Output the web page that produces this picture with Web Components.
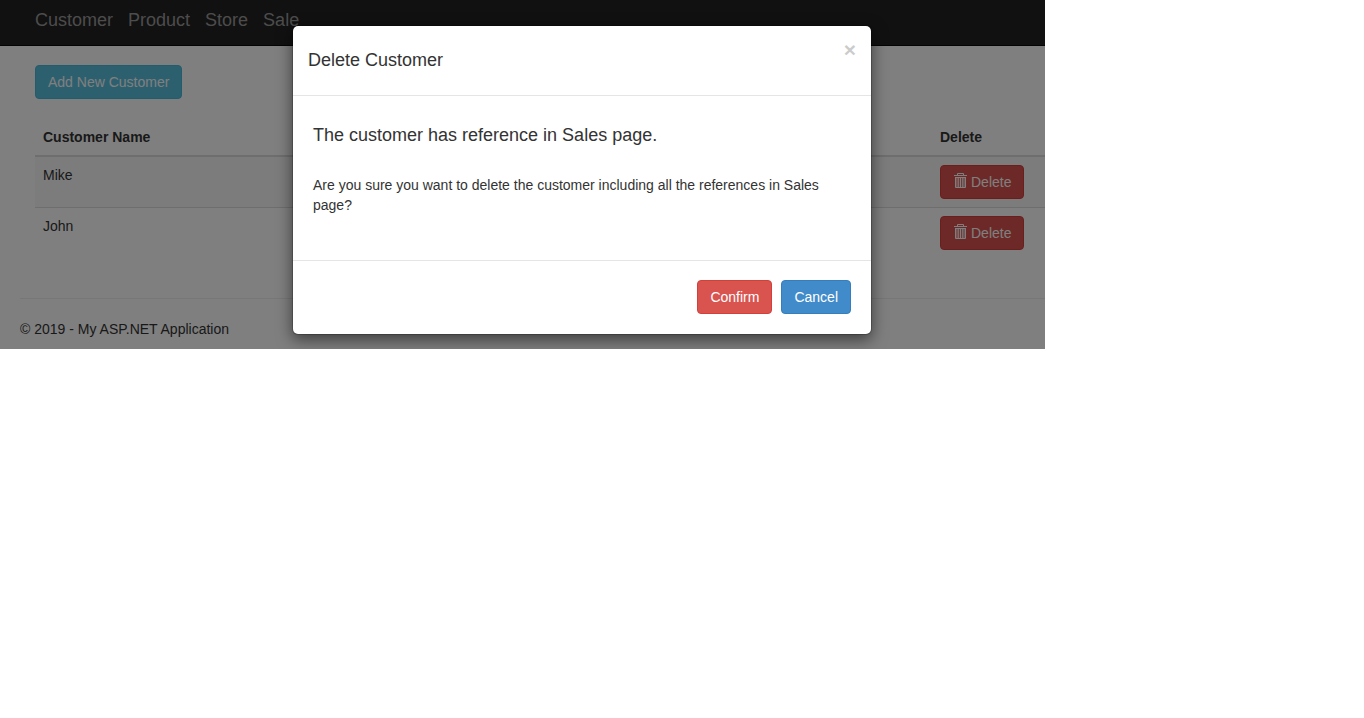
<!DOCTYPE html>
<html lang="en">
<head>
<meta charset="utf-8">
<title>Customers - My ASP.NET Application</title>
<style>
  body {
    margin: 0;
    background: #fff;
    color: #333;
    font: 14px/20px "Liberation Sans", Arial, sans-serif;
  }
</style>
</head>
<body>
<app-shell>
  <nav-bar slot="nav">
    <nav-link href="#customer">Customer</nav-link>
    <nav-link href="#product">Product</nav-link>
    <nav-link href="#store">Store</nav-link>
    <nav-link href="#sale">Sale</nav-link>
  </nav-bar>
  <app-button kind="info">Add New Customer</app-button>
  <customer-table names="Mike,John"></customer-table>
  <span slot="footer">© 2019 - My ASP.NET Application</span>
  <modal-dialog slot="modal">
    <span slot="title">Delete Customer</span>
    <span slot="heading">The customer has reference in Sales page.</span>
    <span>Are you sure you want to delete the customer including all the references in Sales page?</span>
    <app-button slot="actions" kind="danger">Confirm</app-button>
    <app-button slot="actions" kind="primary">Cancel</app-button>
  </modal-dialog>
</app-shell>

<script>
  class BaseElement extends HTMLElement {
    constructor() {
      super();
      this.attachShadow({ mode: "open" });
    }
    connectedCallback() {
      this.shadowRoot.innerHTML = this.render();
    }
  }

  customElements.define("app-shell", class extends BaseElement {
    render() {
      return `
        <style>
          :host { display: block; position: relative; overflow: hidden; margin-right: 319px; }
          main { padding: 19px 0 40px 35px; }
          footer { margin-left: 20px; padding: 20px 0 10px; border-top: 1px solid #eee; }
          .backdrop { position: absolute; inset: 0; background: rgba(0, 0, 0, .5); }
          .overlay { position: absolute; inset: 0; padding: 25px 173px 0 292px; }
        </style>
        <slot name="nav"></slot>
        <main><slot></slot></main>
        <footer><slot name="footer"></slot></footer>
        <div class="backdrop"></div>
        <div class="overlay"><slot name="modal"></slot></div>`;
    }
  });

  customElements.define("nav-bar", class extends BaseElement {
    render() {
      return `
        <style>
          :host { display: block; background: #222; border-bottom: 1px solid #080808; }
          nav { display: flex; gap: 15px; padding: 10px 35px 15px; }
        </style>
        <nav><slot></slot></nav>`;
    }
  });

  customElements.define("nav-link", class extends BaseElement {
    render() {
      return `
        <style>
          :host { display: block; font-size: 18px; }
          a { color: #999; text-decoration: none; }
        </style>
        <a href="${this.getAttribute("href")}"><slot></slot></a>`;
    }
  });

  customElements.define("trash-icon", class extends BaseElement {
    render() {
      return `
        <style>
          :host { display: block; }
          svg { display: block; }
        </style>
        <svg width="14" height="17" viewBox="0 0 14 17" fill="currentColor" aria-hidden="true">
          <path fill-rule="evenodd" d="M4 3V2q0-1 1-1h5q1 0 1 1v1h3v1H1V3zM5 3h5V2H5z"/>
          <path fill-rule="evenodd" d="M2 5h11v10q0 1-1 1H3q-1 0-1-1zM3.500 6v9h1V6zM5.800 6v9h1V6zM8.200 6v9h1V6zM10.500 6v9h1V6z"/>
        </svg>`;
    }
  });

  customElements.define("app-button", class extends BaseElement {
    render() {
      return `
        <style>
          :host { display: inline-block; vertical-align: top; }
          button {
            display: flex; gap: 4px; margin: 0; padding: 6px 12px;
            font: inherit; color: #fff; white-space: nowrap;
            border: 1px solid; border-radius: 4px; cursor: pointer;
          }
          .info { background: #5bc0de; border-color: #46b8da; }
          .danger { background: #d9534f; border-color: #d43f3a; }
          .primary { background: #428bca; border-color: #357ebd; }
        </style>
        <button type="button" class="${this.getAttribute("kind")}"><slot></slot></button>`;
    }
  });

  customElements.define("customer-table", class extends BaseElement {
    render() {
      const rows = this.getAttribute("names").split(",").map(name => `
        <tr>
          <td>${name}</td>
          <td><app-button kind="danger"><trash-icon></trash-icon>Delete</app-button></td>
        </tr>`).join("");
      return `
        <style>
          :host { display: block; margin-top: 20px; }
          table { width: 100%; border-spacing: 0; table-layout: fixed; }
          th, td { padding: 8px; text-align: left; vertical-align: top; }
          th { border-bottom: 2px solid #ddd; }
          th:last-child { width: 97px; }
          tr + tr td { border-top: 1px solid #ddd; }
          tbody tr:nth-child(odd) td { background: #f9f9f9; }
        </style>
        <table>
          <thead><tr><th scope="col">Customer Name</th><th scope="col">Delete</th></tr></thead>
          <tbody>${rows}</tbody>
        </table>`;
    }
  });

  customElements.define("modal-dialog", class extends BaseElement {
    render() {
      return `
        <style>
          :host { display: block; }
          section {
            background: #fff; background-clip: padding-box;
            border: 1px solid rgba(0, 0, 0, .2); border-radius: 6px;
            box-shadow: 0 5px 15px rgba(0, 0, 0, .5);
          }
          header {
            display: flex; justify-content: space-between; align-items: flex-start;
            padding: 14px 15px; border-bottom: 1px solid #e5e5e5;
          }
          h2, h3 { margin: 0; font-size: 18px; line-height: 20px; font-weight: 500; }
          h2 { padding: 10px 0 11px; }
          .close {
            margin: 0; padding: 0; border: 0; background: none; color: #000;
            font: bold 21px/20px "Liberation Sans", Arial, sans-serif;
            opacity: .2; cursor: pointer;
          }
          .body { padding: 29px 20px 45px; }
          p { margin: 30px 0 0; }
          footer {
            display: flex; justify-content: flex-end; gap: 9px;
            padding: 19px 20px 20px; border-top: 1px solid #e5e5e5;
          }
        </style>
        <section role="dialog" aria-modal="true" aria-labelledby="title">
          <header>
            <h2 id="title"><slot name="title"></slot></h2>
            <button type="button" class="close" aria-label="Close">×</button>
          </header>
          <div class="body">
            <h3><slot name="heading"></slot></h3>
            <p><slot></slot></p>
          </div>
          <footer><slot name="actions"></slot></footer>
        </section>`;
    }
  });
</script>
</body>
</html>
